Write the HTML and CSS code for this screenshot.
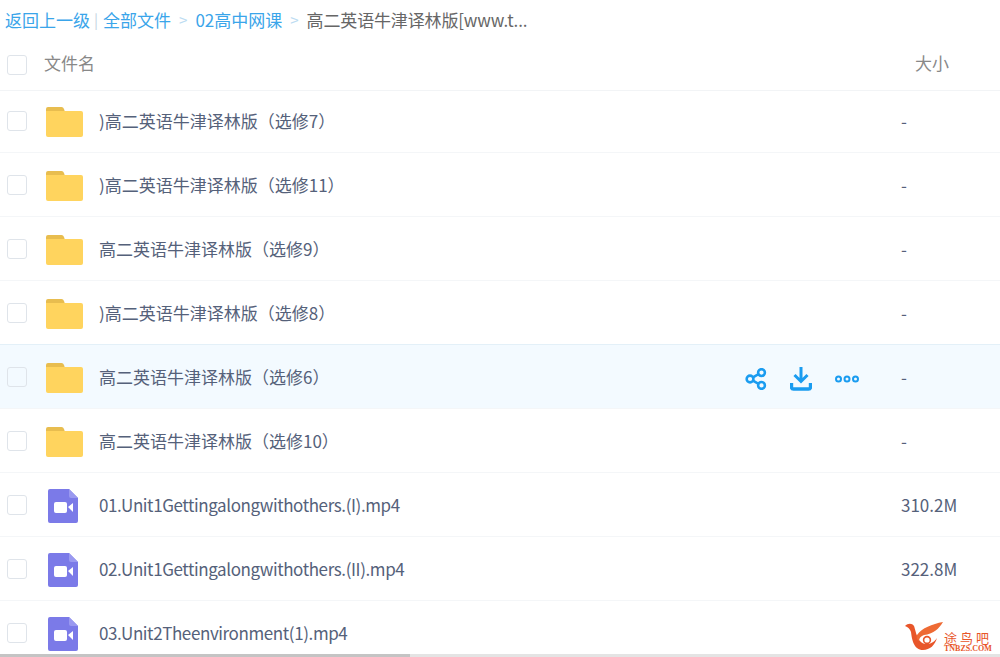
FILE: index.html
```html
<!DOCTYPE html>
<html lang="zh-CN">
<head>
    <meta charset="UTF-8">
    <title>全部文件</title>
    <link rel="stylesheet" href="styles.css">
</head>
<body>
    <svg class="defs" width="0" height="0">
        <symbol id="folder" viewBox="0 0 37 30">
            <path d="M0 2a2 2 0 0 1 2-2h13a3 3 0 0 1 3 2l1 3H0z" fill="#e8bd4f"/>
            <path d="M0 4h35a2 2 0 0 1 2 2v22a2 2 0 0 1-2 2H2a2 2 0 0 1-2-2z" fill="#ffd45e"/>
        </symbol>
        <symbol id="video" viewBox="0 0 30 34">
            <path d="M2 0h19l9 9v23a2 2 0 0 1-2 2H2a2 2 0 0 1-2-2V2a2 2 0 0 1 2-2z" fill="#7b7ae8"/>
            <path d="M21 0l9 9h-7a2 2 0 0 1-2-2z" fill="#9a99f0"/>
            <rect x="6" y="13" width="13" height="11" rx="2" fill="#fff"/>
            <path d="M20 18l5-4v9z" fill="#fff"/>
        </symbol>
    </svg>

    <div class="crumbs">
        <a href="#">返回上一级</a>
        <span class="pipe">|</span>
        <a href="#">全部文件</a>
        <span class="sep">&gt;</span>
        <a href="#">02高中网课</a>
        <span class="sep">&gt;</span>
        <span class="current">高二英语牛津译林版[www.t...</span>
    </div>

    <div class="head">
        <span class="check"></span>
        <span class="name">文件名</span>
        <span class="size-head">大小</span>
    </div>

    <div class="row">
        <span class="check"></span>
        <svg class="icon-folder"><use href="#folder"/></svg>
        <span class="name">)高二英语牛津译林版（选修7）</span>
        <span class="size">-</span>
    </div>
    <div class="row">
        <span class="check"></span>
        <svg class="icon-folder"><use href="#folder"/></svg>
        <span class="name">)高二英语牛津译林版（选修11）</span>
        <span class="size">-</span>
    </div>
    <div class="row">
        <span class="check"></span>
        <svg class="icon-folder"><use href="#folder"/></svg>
        <span class="name">高二英语牛津译林版（选修9）</span>
        <span class="size">-</span>
    </div>
    <div class="row">
        <span class="check"></span>
        <svg class="icon-folder"><use href="#folder"/></svg>
        <span class="name">)高二英语牛津译林版（选修8）</span>
        <span class="size">-</span>
    </div>
    <div class="row active">
        <span class="check"></span>
        <svg class="icon-folder"><use href="#folder"/></svg>
        <span class="name">高二英语牛津译林版（选修6）</span>
        <div class="actions">
            <svg width="22" height="22" viewBox="0 0 24 24" fill="none" stroke="#1a9cf0" stroke-width="2.8">
                <circle cx="5.5" cy="12" r="3.7"/>
                <circle cx="18" cy="5" r="3.7"/>
                <circle cx="18" cy="19" r="3.7"/>
                <path d="M8.7 10.2l6-3.4M8.7 13.8l6 3.4"/>
            </svg>
            <svg width="22" height="24" viewBox="0 0 22 24" fill="none" stroke="#1a9cf0" stroke-width="3">
                <path d="M11 0v14M4.5 8l6.5 6.5L17.5 8"/>
                <path d="M1.5 16v4a2 2 0 0 0 2 2h15a2 2 0 0 0 2-2v-4" stroke-width="3.4"/>
            </svg>
            <svg width="24" height="22" viewBox="0 0 24 22" fill="none" stroke="#1a9cf0" stroke-width="2">
                <circle cx="3.5" cy="11" r="2.5"/>
                <circle cx="12" cy="11" r="2.5"/>
                <circle cx="20.5" cy="11" r="2.5"/>
            </svg>
        </div>
        <span class="size">-</span>
    </div>
    <div class="row">
        <span class="check"></span>
        <svg class="icon-folder"><use href="#folder"/></svg>
        <span class="name">高二英语牛津译林版（选修10）</span>
        <span class="size">-</span>
    </div>
    <div class="row">
        <span class="check"></span>
        <svg class="icon-video"><use href="#video"/></svg>
        <span class="name">01.Unit1Gettingalongwithothers.(I).mp4</span>
        <span class="size">310.2M</span>
    </div>
    <div class="row">
        <span class="check"></span>
        <svg class="icon-video"><use href="#video"/></svg>
        <span class="name">02.Unit1Gettingalongwithothers.(II).mp4</span>
        <span class="size">322.8M</span>
    </div>
    <div class="row last">
        <span class="check"></span>
        <svg class="icon-video"><use href="#video"/></svg>
        <span class="name">03.Unit2Theenvironment(1).mp4</span>
        <span class="size"></span>
    </div>

    <div class="watermark">
        <svg width="40" height="29" viewBox="0 0 40 29" fill="none">
            <path d="M1 4c3-3 7-3 9 0 2 5 3 17 12 18 5 0 8-2 11-6-2 7-7 12-14 12C10 28 8 18 7 10 6 7 4 5 1 4z" fill="#e8562a"/>
            <path d="M13 13C18 6 28 2 39 0c-4 7-10 12-19 13-3 1-5 3-5 6-2-1-3-4-2-6z" fill="#ee6a34"/>
            <circle cx="23" cy="18" r="3.4" stroke="#e8562a" stroke-width="1.6"/>
        </svg>
        <div class="mark-text">
            <span class="mark-cn">途鸟吧</span>
            <span class="mark-en">TNBZS.COM</span>
        </div>
    </div>
    <div class="scrollbar"><div class="scroll-thumb"></div></div>
</body>
</html>
```

FILE: styles.css
```css
body {
    margin: 0;
    height: 657px;
    overflow: hidden;
    position: relative;
    background: #fff;
    color: #55617a;
    font-family: "Noto Sans CJK SC", "Noto Sans", sans-serif;
    font-size: 17px;
}

.defs {
    position: absolute;
}

.crumbs {
    height: 38px;
    padding-left: 5px;
    display: flex;
    align-items: center;
    white-space: nowrap;
}

.crumbs a {
    color: #3aa5ea;
    text-decoration: none;
}

.pipe {
    color: #c5d4e2;
    margin: 0 5px 0 4px;
    font-size: 15px;
}

.sep {
    color: #bcdcf2;
    margin: 0 8px;
    font-size: 15px;
}

.current {
    color: #666;
    letter-spacing: -0.15px;
}

.head {
    height: 48px;
    padding-bottom: 4px;
    display: flex;
    align-items: center;
    border-bottom: 1px solid #f2f4f6;
    color: #888;
}

.head .check {
    margin-top: 6px;
}

.head .name {
    margin-left: 17px;
    color: #888;
}

.size-head {
    margin-left: auto;
    margin-right: 51px;
    color: #888;
}

.check {
    width: 18px;
    height: 18px;
    margin-left: 7px;
    border: 1px solid #dfe4ea;
    border-radius: 3px;
    flex: none;
}

.row {
    height: 63px;
    display: flex;
    align-items: center;
    border-bottom: 1px solid #f4f6f8;
    position: relative;
}

.head + .row {
    height: 59px;
    padding-bottom: 2px;
}

.row.active {
    background: #f3faff;
    border-top: 1px solid #e3f0f8;
    margin-top: -1px;
}

.row.last {
    border-bottom: none;
}

.icon-folder {
    width: 37px;
    height: 30px;
    margin: 2px 0 0 19px;
    flex: none;
}

.icon-video {
    width: 30px;
    height: 34px;
    margin: 2px 0 0 21px;
    flex: none;
}

.icon-folder + .name {
    margin-left: 16px;
}

.icon-video + .name {
    margin-left: 21px;
    letter-spacing: -0.4px;
}

.size {
    position: absolute;
    left: 901px;
}

.actions {
    position: absolute;
    left: 745px;
    display: flex;
    align-items: center;
    gap: 23px;
    margin-top: 4px;
}

.watermark {
    position: absolute;
    left: 904px;
    top: 622px;
    display: flex;
    color: #e8562a;
}

.mark-text {
    display: flex;
    flex-direction: column;
    margin-top: 9px;
    line-height: 13px;
}

.mark-cn {
    font-size: 13px;
    letter-spacing: 3px;
}

.mark-en {
    font-family: "Liberation Serif", serif;
    font-size: 8px;
    line-height: 8px;
    margin-top: 1px;
    font-weight: bold;
}

.scrollbar {
    position: absolute;
    left: 0;
    right: 0;
    bottom: 0;
    height: 3px;
    background: #e4e4e4;
}

.scroll-thumb {
    width: 410px;
    height: 3px;
    background: #c4c4c4;
}
```
